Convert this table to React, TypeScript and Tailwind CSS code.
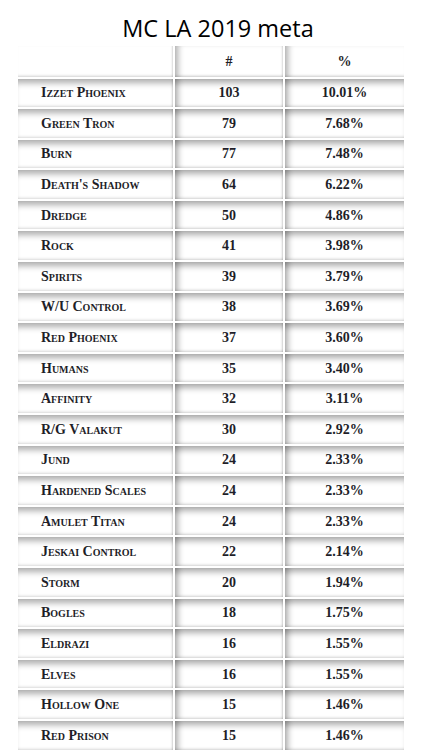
const rows: [string, number, string][] = [
  ['Izzet Phoenix', 103, '10.01%'],
  ['Green Tron', 79, '7.68%'],
  ['Burn', 77, '7.48%'],
  ["Death's Shadow", 64, '6.22%'],
  ['Dredge', 50, '4.86%'],
  ['Rock', 41, '3.98%'],
  ['Spirits', 39, '3.79%'],
  ['W/U Control', 38, '3.69%'],
  ['Red Phoenix', 37, '3.60%'],
  ['Humans', 35, '3.40%'],
  ['Affinity', 32, '3.11%'],
  ['R/G Valakut', 30, '2.92%'],
  ['Jund', 24, '2.33%'],
  ['Hardened Scales', 24, '2.33%'],
  ['Amulet Titan', 24, '2.33%'],
  ['Jeskai Control', 22, '2.14%'],
  ['Storm', 20, '1.94%'],
  ['Bogles', 18, '1.75%'],
  ['Eldrazi', 16, '1.55%'],
  ['Elves', 16, '1.55%'],
  ['Hollow One', 15, '1.46%'],
  ['Red Prison', 15, '1.46%'],
];

const cellText = "font-['Liberation_Serif',serif] font-bold text-[14px] text-[#1e1e28]";

export default function App() {
  return (
    <div className="w-[436px] h-[750px] bg-white overflow-hidden">
      {/* title */}
      <div className="h-[46px] pt-[13px] text-center font-['Open_Sans',sans-serif] text-[23.5px] leading-[30px] text-black">
        MC LA 2019 meta
      </div>

      {/* table */}
      <div className={`ml-[18px] grid grid-cols-[155px_108px_119px] gap-[2px] ${cellText}`}>
        <div className="h-[30.5px] shadow-[inset_0_-3px_3px_-2px_rgba(0,0,0,0.18),inset_-2px_0_2px_-1px_rgba(0,0,0,0.15)]" />
        <div className="h-[30.5px] flex items-center justify-center shadow-[inset_7px_0_6px_-4px_rgba(0,0,0,0.32),inset_0_-3px_3px_-2px_rgba(0,0,0,0.18),inset_-2px_0_2px_-1px_rgba(0,0,0,0.15)]">
          #
        </div>
        <div className="h-[30.5px] flex items-center justify-center shadow-[inset_7px_0_6px_-4px_rgba(0,0,0,0.32),inset_0_-3px_3px_-2px_rgba(0,0,0,0.18)]">
          %
        </div>

        {rows.map(([name, count, pct]) => (
          <div key={name} className="contents">
            <div className="h-[28.6px] flex items-center pl-[23px] [font-variant:small-caps] shadow-[inset_0_8px_6px_-4px_rgba(0,0,0,0.32),inset_0_-3px_3px_-2px_rgba(0,0,0,0.15),inset_-2px_0_2px_-1px_rgba(0,0,0,0.15)]">
              {name}
            </div>
            <div className="h-[28.6px] flex items-center justify-center shadow-[inset_0_8px_6px_-4px_rgba(0,0,0,0.32),inset_7px_0_6px_-4px_rgba(0,0,0,0.32),inset_0_-3px_3px_-2px_rgba(0,0,0,0.15),inset_-2px_0_2px_-1px_rgba(0,0,0,0.15)]">
              {count}
            </div>
            <div className="h-[28.6px] flex items-center justify-center shadow-[inset_0_8px_6px_-4px_rgba(0,0,0,0.32),inset_7px_0_6px_-4px_rgba(0,0,0,0.32),inset_0_-3px_3px_-2px_rgba(0,0,0,0.15)]">
              {pct}
            </div>
          </div>
        ))}
      </div>
    </div>
  );
}
